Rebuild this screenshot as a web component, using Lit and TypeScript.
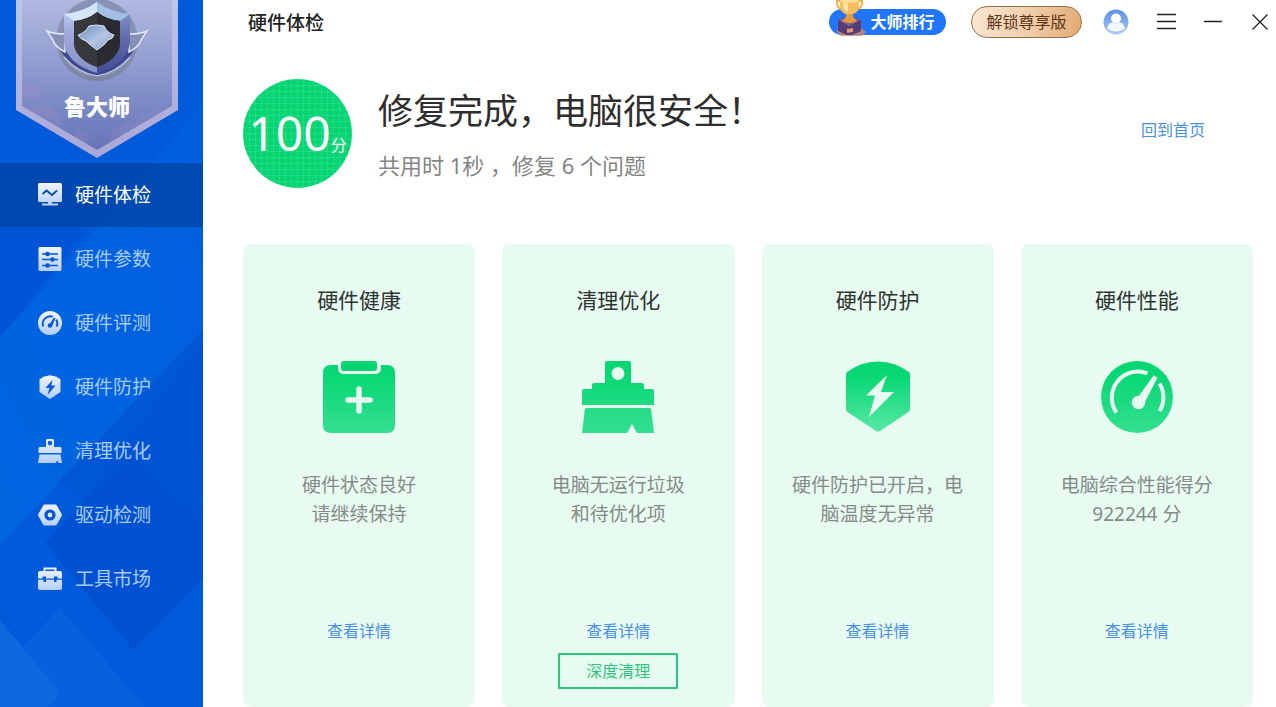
import { LitElement, html, css, svg } from "lit";
import { customElement, property, state } from "lit/decorators.js";
import { classMap } from "lit/directives/class-map.js";

const navItems = [
  { id: "check", label: "硬件体检" },
  { id: "params", label: "硬件参数" },
  { id: "bench", label: "硬件评测" },
  { id: "guard", label: "硬件防护" },
  { id: "clean", label: "清理优化" },
  { id: "driver", label: "驱动检测" },
  { id: "tools", label: "工具市场" },
];

const cards = [
  { icon: "health", title: "硬件健康", lines: ["硬件状态良好", "请继续保持"], action: "" },
  { icon: "clean", title: "清理优化", lines: ["电脑无运行垃圾", "和待优化项"], action: "深度清理" },
  { icon: "guard", title: "硬件防护", lines: ["硬件防护已开启，电", "脑温度无异常"], action: "" },
  { icon: "speed", title: "硬件性能", lines: ["电脑综合性能得分", "922244 分"], action: "" },
];

const navGlyphs: Record<string, unknown> = {
  check: svg`
    <path fill="url(#n)" d="M1.500 0h21q1.500 0 1.500 1.500v16q0 1.500-1.500 1.500h-21q-1.500 0-1.500-1.500v-16q0-1.500 1.500-1.500z"/>
    <path fill="url(#n)" d="M10 19h4v1.500h6v2h-16v-2h6z"/>
    <path d="M4.500 11l4-3.500 5.500 4.500 5-4.500" fill="none" stroke="#004db5" stroke-width="1.800"/>`,
  params: svg`
    <rect y="0" x="0.500" width="23" height="24" rx="1.500" fill="url(#n)"/>
    <path d="M4 7h16M4 12.500h16M4 18.500h16" stroke="#0058d6" stroke-width="1.700"/>
    <g fill="#0058d6"><circle cx="9.500" cy="7" r="2.300"/><circle cx="14.500" cy="12.500" r="2.300"/><circle cx="9.500" cy="18.500" r="2.300"/></g>`,
  bench: svg`
    <circle cx="12" cy="12" r="12" fill="url(#n)"/>
    <path d="M5.200 15.500A7.600 7.600 0 0 1 14.800 5.700M18.200 8.500A7.600 7.600 0 0 1 18.800 15.500" fill="none" stroke="#0058d6" stroke-width="1.900"/>
    <path d="M15.800 6.500l1.600 .8-3.200 7.500-2.600-1.200z" fill="#0058d6"/><circle cx="12" cy="14.500" r="2.300" fill="#0058d6"/>`,
  guard: svg`
    <path fill="url(#n)" d="M12 0.300Q18 1 22.500 4.200V17L12 24 1.500 17V4.200Q6 1 12 0.300z"/>
    <path d="M14.500 5l-7 8h4l-2 7 8-9.500h-4.200z" fill="#0058d6"/>`,
  clean: svg`
    <path fill="url(#n)" fill-rule="evenodd" d="M9.500 0h5q1.500 0 1.500 1.500V8h6q1.500 0 1.500 1.500V14H.5V9.500Q.5 8 2 8h6V1.500Q8 0 9.500 0zM12 1.800a2.300 2.300 0 1 0 0 4.600 2.300 2.300 0 0 0 0-4.600z"/>
    <path fill="url(#n)" d="M1.500 15.500h21L24 24h-3.500l-1-2.500-2 2.500H0z"/>`,
  driver: svg`
    <path fill="url(#n)" d="M6.500 1.500h11q.8 0 1.200.7L23.800 11.300q.4.700 0 1.400L18.700 21.800q-.4.700-1.200.7h-11q-.8 0-1.200-.7L.2 12.700q-.4-.7 0-1.400L5.300 2.200Q5.700 1.500 6.500 1.500z"/>
    <circle cx="12" cy="12" r="4" fill="#dfe9ff" stroke="#0055d4" stroke-width="3.200"/>`,
  tools: svg`
    <path d="M6.500 5V1.500h11V5" fill="none" stroke="#edf3ff" stroke-width="2"/>
    <path fill="url(#n)" d="M2 4h20q2 0 2 2v5.500h-4.500V9.500h-3.500v2H8V9.500H4.500v2H0V6q0-2 2-2zM0 12.800h5.500V15h2.500v-2.200h8V15h2.500v-2.200H24V21q0 2-2 2H2q-2 0-2-2z"/>`,
};

const cardGlyphs: Record<string, unknown> = {
  health: svg`
    <path fill="url(#g)" d="M8 4h7v3q0 6 6 6h31q6 0 6-6V4h6q8 0 8 8v52q0 8-8 8H8q-8 0-8-8V12Q0 4 8 4z"/>
    <rect x="18" y="0" width="36" height="10" rx="3" fill="#04d574"/>
    <path d="M36 28v22M25 39h22" stroke="#e8fbf1" stroke-width="5.500" stroke-linecap="round"/>`,
  clean: svg`
    <path fill="url(#g)" fill-rule="evenodd" d="M25 0h22q2 0 2 2v20h11q2 0 2 2v4h8q2 0 2 2v14H0V30q0-2 2-2h8v-4q0-2 2-2h11V2q0-2 2-2zM36 6a6.500 6.500 0 1 0 0 13 6.500 6.500 0 0 0 0-13z"/>
    <path fill="url(#g2)" d="M4.500 47h63q1.500 0 1.700 1.500L72 72H55l-5-9-5 9H0L2.800 48.500Q3 47 4.500 47z"/>`,
  guard: svg`
    <path fill="url(#g)" d="M36 .5Q53 .5 67 11q1 1 1 2.500V48q0 2-1.500 3L38 70q-2 1-4 0L5.500 51Q4 50 4 48V13.500Q4 12 5 11 19 .5 36 .5z"/>
    <path d="M45 14L24 34.500h9L27 56l25-25H39z" fill="#e8fbf1"/>`,
  speed: svg`
    <circle cx="36" cy="36" r="36" fill="url(#g)"/>
    <path d="M15.500 51.500A26 26 0 0 1 46.500 12.500M58.500 22.500A26 26 0 0 1 58.500 50" fill="none" stroke="#e8fbf1" stroke-width="4"/>
    <path d="M52.500 14.500l4 2L43 43l-8-4z" fill="#e8fbf1"/><circle cx="37.500" cy="41.500" r="6.700" fill="#e8fbf1"/>`,
};

@customElement("nav-icon")
export class NavIcon extends LitElement {
  @property() name = "check";
  static styles = css`
    :host { display: block; width: 24px; height: 24px; }
    .glyph { display: block; width: 100%; height: 100%; overflow: visible; }
  `;
  render() {
    return html`<svg class="glyph" viewBox="0 0 24 24" aria-hidden="true">
      <defs><linearGradient id="n" gradientUnits="userSpaceOnUse" x1="0" y1="0" x2="0" y2="24">
        <stop offset="0" stop-color="#f0f5ff"/><stop offset="1" stop-color="#b4cdfb"/>
      </linearGradient></defs>
      ${navGlyphs[this.name]}
    </svg>`;
  }
}

@customElement("card-icon")
export class CardIcon extends LitElement {
  @property() name = "health";
  static styles = css`
    :host { display: block; width: 72px; height: 72px; }
    .glyph { display: block; width: 100%; height: 100%; }
  `;
  render() {
    return html`<svg class="glyph" viewBox="0 0 72 72" aria-hidden="true">
      <defs>
        <linearGradient id="g" gradientUnits="userSpaceOnUse" x1="0" y1="0" x2="0" y2="72">
          <stop offset="0" stop-color="#03d671"/><stop offset="0.250" stop-color="#0bd876"/><stop offset="1" stop-color=${this.name === "guard" ? "#5be8a5" : "#34df90"}/>
        </linearGradient>
        <linearGradient id="g2" gradientUnits="userSpaceOnUse" x1="0" y1="0" x2="0" y2="72">
          <stop offset="0" stop-color="#0bd876"/><stop offset="1" stop-color="#34df90"/>
        </linearGradient>
      </defs>
      ${cardGlyphs[this.name]}
    </svg>`;
  }
}

@customElement("brand-banner")
export class BrandBanner extends LitElement {
  static styles = css`
    :host { display: grid; width: 162px; height: 158px; }
    .art { grid-area: 1 / 1; display: block; width: 162px; height: 158px; }
    .name {
      grid-area: 1 / 1; align-self: end; text-align: center; color: #fff;
      font-size: 22px; line-height: 30px; font-weight: 900; padding-bottom: 37px; z-index: 1;
    }
  `;
  render() {
    return html`
      <svg class="art" viewBox="16 0 162 158" aria-hidden="true">
        <defs>
          <linearGradient id="bg" x1="0" y1="0" x2="0" y2="1">
            <stop offset="0" stop-color="#b0b9e0"/><stop offset="0.550" stop-color="#8794cb"/><stop offset="1" stop-color="#6675b8"/>
          </linearGradient>
          <linearGradient id="rim" x1="0" y1="0" x2="0" y2="1">
            <stop offset="0" stop-color="#bcc5ea"/><stop offset="1" stop-color="#a9a6d6"/>
          </linearGradient>
          <linearGradient id="left" x1="0" y1="0" x2="0" y2="1">
            <stop offset="0" stop-color="#c3d6f1"/><stop offset="0.450" stop-color="#a0a8dc"/><stop offset="1" stop-color="#8491c6"/>
          </linearGradient>
          <linearGradient id="right" x1="0" y1="0" x2="0" y2="1">
            <stop offset="0" stop-color="#8ba3d0"/><stop offset="0.500" stop-color="#626bab"/><stop offset="1" stop-color="#454c95"/>
          </linearGradient>
          <linearGradient id="face" x1="0" y1="0" x2="1" y2="1">
            <stop offset="0" stop-color="#6a8bc0"/><stop offset="0.550" stop-color="#b3c6e3"/><stop offset="1" stop-color="#8299c2"/>
          </linearGradient>
          <linearGradient id="ring" x1="0" y1="0" x2="0" y2="1">
            <stop offset="0" stop-color="#98a3c4"/><stop offset="1" stop-color="#7a849f"/>
          </linearGradient>
          <clipPath id="inside"><path d="M22 0H172V106L97 150 22 106z"/></clipPath>
        </defs>
        <path d="M16 0H178V110L97 158 16 110z" fill="url(#rim)"/>
        <path d="M22 0H172V106L97 150 22 106z" fill="url(#bg)"/>
        <g clip-path="url(#inside)" fill="#b08fc4" opacity="0.180">
          <path d="M22 84q14-4 18 6 2 7-8 8l-10 1z"/>
          <path d="M27 112q6-8 16-6 10-2 12 6 10 2 7 12-12 6-20-4-10 2-15-8z"/>
          <path d="M110 136q2-10 12-9 4-8 14-5 2-8 12-6 6-8 24-6v20l-60 26z"/>
          <circle cx="82" cy="138" r="7"/>
        </g>
        <circle cx="97" cy="40" r="41" fill="url(#ring)"/>
        <circle cx="97" cy="38" r="39" fill="#8792b5"/>
        <path d="M59 48Q70 70 97 77 124 70 135 48L130 44H64z" fill="#3d4891"/>
        <path d="M64 57Q78 73 97 76 116 73 130 57" fill="none" stroke="#b8c2da" stroke-width="1.500"/>
        <path d="M47 31q6 3 18 3v18Q55 47 53 40z" fill="#8491b5" stroke="#e1e9f6" stroke-width="1.500"/>
        <path d="M147 31q-6 3-18 3v18q10-5 12-12z" fill="#8491b5" stroke="#e1e9f6" stroke-width="1.500"/>
        <path d="M97 2v10Q87 20 74 21V45Q77 60 97 67v6Q67 64 64 43V14Q84 12 97 2z" fill="url(#left)"/>
        <path d="M97 2v10q10 8 23 9V45Q117 60 97 67v6q30-9 33-30V14Q110 12 97 2z" fill="url(#right)"/>
        <path d="M97 2v10Q87 20 74 21L64 14Q84 12 97 2z" fill="#d4e6f8"/>
        <path d="M97 2v10q10 8 23 9l10-7Q110 12 97 2z" fill="#a3bfe5"/>
        <path d="M97 12Q107 20 120 21V45Q117 60 97 67 77 60 74 45V21Q87 20 97 12z" fill="#37383c"/>
        <path d="M97 12Q107 20 120 21V45Q117 60 97 67z" fill="#2a2b30"/>
        <path d="M89 26q8-2 15 0 3 7 10 9-1 4-6 5-3 5-11 10-7-5-11-9-6-2-8-6 7-2 11-9z" fill="url(#face)" stroke="#dbe7f6" stroke-width="1" stroke-linejoin="round"/>
      </svg>
      <span class="name">鲁大师</span>
    `;
  }
}

@customElement("status-card")
export class StatusCard extends LitElement {
  @property({ attribute: false }) card = cards[0];
  static styles = css`
    :host {
      display: flex; flex-direction: column; align-items: center; box-sizing: border-box;
      min-width: 0; padding: 40px 10px 18px; border-radius: 8px; background: #e8fbf1;
    }
    .title { margin: 0; font-size: 21px; line-height: 32px; font-weight: 400; color: #2f3432; }
    .icon { margin-top: 45px; }
    .text { margin: 38px 0 0; font-size: 19px; line-height: 29px; color: #858b88; text-align: center; white-space: nowrap; }
    .line { display: block; }
    .more { margin-top: auto; font-size: 16px; line-height: 24px; color: #4a90e2; text-decoration: none; }
    .slot { display: flex; height: 36px; margin-top: 10px; }
    .deep {
      box-sizing: border-box; width: 120px; height: 36px; padding: 0; font: inherit; font-size: 16px;
      line-height: 24px; color: #2fc57e; background: transparent; border: 2px solid #27c87e; border-radius: 1px; cursor: pointer;
    }
  `;
  render() {
    const c = this.card;
    return html`
      <h2 class="title">${c.title}</h2>
      <card-icon class="icon" name=${c.icon}></card-icon>
      <p class="text">${c.lines.map((l) => html`<span class="line">${l}</span>`)}</p>
      <a class="more" href="#detail">查看详情</a>
      <div class="slot">${c.action ? html`<button class="deep" type="button">${c.action}</button>` : ""}</div>
    `;
  }
}

@customElement("app-root")
export class AppRoot extends LitElement {
  @state() private active = "check";

  static styles = css`
    :host {
      display: grid; grid-template-columns: 203px minmax(0, 1fr); min-height: 100vh;
      background: #fff; color: #333; font-family: "Noto Sans", "Noto Sans CJK SC", sans-serif;
    }
    .side { position: relative; overflow: hidden; background: #005ad9; }
    .facets { position: absolute; inset: 0; width: 100%; height: 100%; }
    .rail { position: relative; display: flex; flex-direction: column; }
    .brand { margin: 0 0 5px 16px; }
    .item {
      display: flex; align-items: center; gap: 13px; height: 64px; width: 100%; padding: 0 0 0 38px;
      border: 0; background: transparent; color: #a9cbf7; font: inherit; font-size: 19px; line-height: 28px; cursor: pointer;
    }
    .item.on { background: rgba(0, 58, 140, 0.55); color: #fff; }
    .main { display: flex; flex-direction: column; min-width: 0; }
    .bar { display: flex; align-items: center; height: 44px; padding: 0 6px 0 45px; }
    .page { margin: 0 auto 0 0; padding-top: 2px; font-size: 19px; line-height: 28px; font-weight: 500; color: #222; }
    .rank {
      position: relative; height: 26px; width: 117px; padding: 0 0 0 30px; margin-right: 25px; border: 0; border-radius: 13px;
      background: #2075fa; color: #fff; font: inherit; font-weight: 700; font-size: 16px; line-height: 26px; cursor: pointer;
    }
    .cup { position: absolute; left: 6px; bottom: -1px; width: 31px; height: 38px; }
    .vip {
      box-sizing: border-box; height: 32px; width: 111px; padding: 0; margin-right: 21px; border: 1px solid #987247; border-radius: 16px;
      background: linear-gradient(100deg, #fae7d3 0%, #f0cfae 50%, #e2aa74 100%);
      color: #5c3514; font: inherit; font-size: 16px; line-height: 28px; cursor: pointer;
    }
    .tools { display: flex; align-items: center; gap: 27px; }
    .tool { display: block; padding: 0; border: 0; background: transparent; cursor: pointer; }
    .tool svg { display: block; }
    .hero { display: flex; align-items: center; height: 109px; padding: 35px 71px 56px 40px; }
    .score {
      display: flex; align-items: baseline; justify-content: center; box-sizing: border-box; flex: none;
      width: 109px; height: 109px; padding-top: 21px; border-radius: 50%; color: #fff;
      background:
        repeating-linear-gradient(0deg, rgba(70, 225, 150, 0.4) 0 1px, transparent 1px 6px),
        repeating-linear-gradient(90deg, rgba(70, 225, 150, 0.4) 0 1px, transparent 1px 6px),
        #05d573;
    }
    .num { font-size: 48px; line-height: 66px; }
    .unit { font-size: 16px; line-height: 24px; }
    .words { margin: 0 auto 0 26px; }
    .big { margin: 0; font-size: 35px; line-height: 48px; font-weight: 400; color: #2e2e2e; white-space: nowrap; }
    .sub { margin: 14px 0 0; font-size: 22px; line-height: 32px; color: #858585; white-space: nowrap; }
    .home { padding-bottom: 7px; font-size: 16px; line-height: 24px; color: #4a90e2; text-decoration: none; }
    .cards { flex: 1; display: grid; grid-template-columns: repeat(4, minmax(0, 1fr)); gap: 27px; padding: 0 23px 0 40px; }
  `;

  render() {
    return html`
      <aside class="side">
        <svg class="facets" viewBox="0 0 203 707" preserveAspectRatio="none" aria-hidden="true">
          <defs>
            <linearGradient id="band" x1="0" y1="1" x2="1" y2="0">
              <stop offset="0" stop-color="#0066e0"/><stop offset="1" stop-color="#005edd"/>
            </linearGradient>
            <linearGradient id="deep" x1="0" y1="1" x2="1" y2="0">
              <stop offset="0" stop-color="#0054d4"/><stop offset="1" stop-color="#0055d5"/>
            </linearGradient>
          </defs>
          <path d="M203 105V330L0 545V337L40 293z" fill="url(#band)"/>
          <path d="M0 227h90L0 337z" fill="#0055d6"/>
          <path d="M203 330V400L82 503 60 480z" fill="#0057d6"/>
          <path d="M203 340V578L133 650 45 543 82 503z" fill="url(#deep)"/>
          <path d="M82 503L133 455 203 520V578L133 650 45 543z" fill="#0050d0" opacity="0.600"/>
          <path d="M60 607L145 707H0V620L23 647z" fill="#0760dd"/>
          <path d="M0 620L60 693 48 707H0z" fill="#1068df"/>
        </svg>
        <nav class="rail">
          <brand-banner class="brand"></brand-banner>
          ${navItems.map(
            (n) => html`<button
              type="button"
              class=${classMap({ item: true, on: n.id === this.active })}
              @click=${() => (this.active = n.id)}
            ><nav-icon name=${n.id}></nav-icon><span>${n.label}</span></button>`
          )}
        </nav>
      </aside>
      <main class="main">
        <header class="bar">
          <h1 class="page">硬件体检</h1>
          <button class="rank" type="button">
            <svg class="cup" viewBox="0 0 31 38" aria-hidden="true">
              <path d="M1 33l6-5h17l7 6-4 4H6z" fill="#d3836b" opacity="0.800"/>
              <path d="M3 22l11-4 12 4v11l-9 4h-5l-9-4z" fill="#563c73"/>
              <path d="M3 22l11-4 12 4-12 6z" fill="#80608f"/>
              <path d="M12 31l6-1v4l-6 1z" fill="#d99b72"/>
              <path d="M11 14h7v5l4 4q-8 4-15 0l4-4z" fill="#e39a40"/>
              <path d="M6 3H2v3q1 5 6 5M23 3h4v3q-1 5-6 5" fill="none" stroke="#f3b04c" stroke-width="2"/>
              <path d="M5 2h19v5q0 8-6 9h-7Q5 15 5 7z" fill="#f7bf5c"/>
              <path d="M8 3h5v11Q8 12 8 7z" fill="#ffe5a4"/>
              <ellipse cx="14.500" cy="2.500" rx="9.500" ry="2.500" fill="#ffdc91"/>
            </svg>大师排行
          </button>
          <button class="vip" type="button">解锁尊享版</button>
          <div class="tools">
            <button class="tool" type="button" aria-label="用户">
              <svg width="26" height="26" viewBox="0 0 26 26">
                <defs><linearGradient id="u" x1="0" y1="0" x2="0" y2="1"><stop offset="0" stop-color="#5b8fe0"/><stop offset="1" stop-color="#a9cbfa"/></linearGradient></defs>
                <circle cx="13" cy="13" r="12.500" fill="url(#u)"/>
                <circle cx="13" cy="9.500" r="5" fill="#fff"/>
                <path d="M4 19.500Q5 13.500 10 13.500q3 2 6 0 5 0 6 6-3.500 3-9 3t-9-3z" fill="#f5f9ff"/>
              </svg>
            </button>
            <button class="tool" type="button" aria-label="菜单">
              <svg width="20" height="20" viewBox="0 0 20 20"><path d="M1 2.500h19M1 9.500h19M1 16.500h19" stroke="#222" stroke-width="1.500"/></svg>
            </button>
            <button class="tool" type="button" aria-label="最小化">
              <svg width="20" height="20" viewBox="0 0 20 20"><path d="M1 9.500h18" stroke="#222" stroke-width="1.500"/></svg>
            </button>
            <button class="tool" type="button" aria-label="关闭">
              <svg width="20" height="20" viewBox="0 0 20 20"><path d="M2.500 2.500l15 15M17.500 2.500l-15 15" stroke="#222" stroke-width="1.300"/></svg>
            </button>
          </div>
        </header>
        <section class="hero">
          <div class="score"><span class="num">100</span><span class="unit">分</span></div>
          <div class="words">
            <p class="big">修复完成，电脑很安全！</p>
            <p class="sub">共用时 1秒 ，修复 6 个问题</p>
          </div>
          <a class="home" href="#home">回到首页</a>
        </section>
        <section class="cards">
          ${cards.map((c) => html`<status-card .card=${c}></status-card>`)}
        </section>
      </main>
    `;
  }
}
